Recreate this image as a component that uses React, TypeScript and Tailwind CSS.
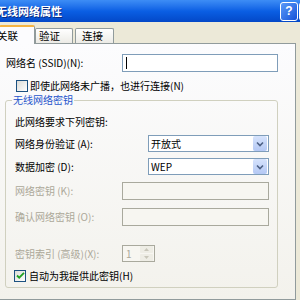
const font = "font-['Noto_Sans_CJK_SC','Noto_Sans',sans-serif]"

function Checkbox({ checked }: { checked?: boolean }) {
  return (
    <span className="w-[12px] h-[12px] shrink-0 border border-[#1c5180] bg-gradient-to-br from-[#dcdcd7] to-white flex items-center justify-center">
      {checked && (
        <svg className="w-[9px] h-[9px]" viewBox="0 0 9 9">
          <path d="M1 4.5l2.2 2.2L8 1.8" fill="none" stroke="#21a121" strokeWidth={1.8} />
        </svg>
      )}
    </span>
  )
}

function Select({ value }: { value: string }) {
  return (
    <div className="w-[121px] h-[17px] border border-[#7f9db9] bg-white flex items-center">
      <span className="flex-1 pl-[2px] text-[10px] leading-none">{value}</span>
      <span className="w-[14px] h-[15px] mr-px rounded-[2px] bg-gradient-to-b from-[#d6e3fc] to-[#b4c8f4] flex items-center justify-center">
        <svg className="w-[8px] h-[6px]" viewBox="0 0 8 6">
          <path d="M1 1.5l3 3 3-3" fill="none" stroke="#4d6185" strokeWidth={1.6} />
        </svg>
      </span>
    </div>
  )
}

function DisabledInput() {
  return <div className="w-[147px] h-[18px] border border-[#a9a99d] bg-[#f7f6f1]" />
}

export default function App() {
  return (
    <div className={`w-[300px] h-[300px] overflow-hidden bg-[#ece9d8] flex flex-col ${font} text-black`}>
      {/* Title bar */}
      <div className="h-[22px] shrink-0 flex items-center bg-gradient-to-b from-[#3d8df5] via-[#0b5fe4] to-[#0448c8]">
        <span className="-ml-[4px] text-[11px] font-bold text-white leading-none [text-shadow:1px_1px_0_#0a2a80]">
          无线网络属性
        </span>
        <div className="ml-auto flex items-center gap-px shrink-0 -mr-[20px]">
          <span className="w-[18px] h-[19px] rounded-[3px] border border-white bg-gradient-to-br from-[#5b9af8] to-[#1651d8] flex items-center justify-center text-white text-[12px] font-bold leading-none font-['Liberation_Sans',sans-serif]">
            ?
          </span>
          <span className="w-[21px] h-[19px] rounded-[3px] border border-white bg-[#e0532f]" />
        </div>
      </div>

      {/* Tabs */}
      <div className="h-[22px] shrink-0 flex items-end relative z-10">
        <div className="w-[36px] h-[19px] -ml-px bg-[#fcfcfe] border-x border-[#919b9c] border-t-[2px] border-t-[#f5b443] rounded-t-[2px] flex items-center pl-[0px] text-[10.5px] leading-none">
          <span className="-ml-[3px] mt-[1px]">关联</span>
        </div>
        <div className="w-[38px] h-[15px] mb-px bg-gradient-to-b from-white to-[#ecebe6] border border-b-0 border-[#919b9c] rounded-t-[2px] flex items-center pl-[3px] text-[10.5px] leading-none">
          验证
        </div>
        <div className="w-[39px] h-[15px] mb-px ml-[2px] bg-gradient-to-b from-white to-[#ecebe6] border border-b-0 border-[#919b9c] rounded-t-[2px] flex items-center pl-[6px] text-[10.5px] leading-none">
          连接
        </div>
      </div>

      {/* Panel */}
      <div className="-ml-px -mt-px w-[297px] flex-1 border border-[#919b9c] bg-gradient-to-b from-[#fcfcfe] to-[#f3f2ec] text-[10px] leading-[12px]">
        <div className="mt-[10px] flex items-center h-[18px]">
          <span className="w-[122px] pl-[6px]">网络名 (SSID)(N):</span>
          <div className="w-[156px] h-[18px] border border-[#7f9db9] bg-white flex items-center pl-[3px]">
            <span className="w-px h-[12px] bg-black" />
          </div>
        </div>

        <div className="mt-[7px] h-[13px] flex items-center gap-[2px] pl-[16px]">
          <Checkbox />
          <span>即使此网络未广播，也进行连接(N)</span>
        </div>

        <fieldset className="ml-[5px] mt-[2px] w-[273px] border border-[#d0d0bf] rounded-[3px] pb-[5px]">
          <legend className="ml-[6px] px-px text-[#1f55cc] leading-[12px]">无线网络密钥</legend>

          <div className="mt-[10px] pl-[9px] h-[12px]">此网络要求下列密钥:</div>

          <div className="mt-[7px] flex items-center h-[17px] pl-[9px]">
            <span className="w-[133px]">网络身份验证 (A):</span>
            <Select value="开放式" />
          </div>
          <div className="mt-[6px] flex items-center h-[17px] pl-[9px]">
            <span className="w-[133px]">数据加密 (D):</span>
            <Select value="WEP" />
          </div>

          <div className="mt-[7px] flex items-center h-[18px] pl-[9px] text-[#aca899]">
            <span className="w-[107px]">网络密钥 (K):</span>
            <DisabledInput />
          </div>
          <div className="mt-[8px] flex items-center h-[18px] pl-[9px] text-[#aca899]">
            <span className="w-[107px]">确认网络密钥 (O):</span>
            <DisabledInput />
          </div>

          <div className="mt-[19px] flex items-center h-[17px] pl-[9px] text-[#aca899]">
            <span className="w-[107px]">密钥索引 (高级)(X):</span>
            <div className="w-[33px] h-[17px] border border-[#a9a99d] bg-[#f7f6f1] flex items-center">
              <span className="flex-1 pl-[3px]">1</span>
              <div className="w-[13px] h-[15px] mr-px flex flex-col gap-px">
                <span className="flex-1 rounded-[1px] bg-[#eeede5] flex items-center justify-center">
                  <svg className="w-[5px] h-[3px]" viewBox="0 0 5 3"><path d="M0 3l2.5-3L5 3z" fill="#c9c7ba" /></svg>
                </span>
                <span className="flex-1 rounded-[1px] bg-[#eeede5] flex items-center justify-center">
                  <svg className="w-[5px] h-[3px]" viewBox="0 0 5 3"><path d="M0 0l2.5 3L5 0z" fill="#c9c7ba" /></svg>
                </span>
              </div>
            </div>
          </div>

          <div className="mt-[7px] h-[13px] flex items-center gap-[3px] pl-[8px]">
            <Checkbox checked />
            <span>自动为我提供此密钥(H)</span>
          </div>
        </fieldset>
      </div>
    </div>
  )
}
